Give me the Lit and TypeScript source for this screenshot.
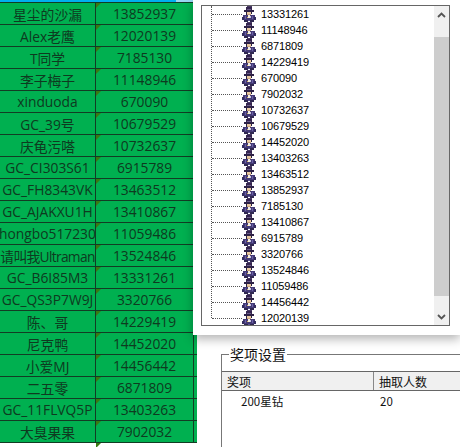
import { LitElement, html, css, svg } from "lit";
import { customElement } from "lit/decorators.js";

const ROWS: [string, string][] = [
  ["星尘的沙漏", "13852937"], ["Alex老鹰", "12020139"], ["T同学", "7185130"], ["李子梅子", "11148946"],
  ["xinduoda", "670090"], ["GC_39号", "10679529"], ["庆龟污嗒", "10732637"], ["GC_CI303S61", "6915789"],
  ["GC_FH8343VK", "13463512"], ["GC_AJAKXU1H", "13410867"], ["hongbo517230", "11059486"], ["请叫我Ultraman", "13524846"],
  ["GC_B6I85M3", "13331261"], ["GC_QS3P7W9J", "3320766"], ["陈、哥", "14229419"], ["尼克鸭", "14452020"],
  ["小爱MJ", "14456442"], ["二五零", "6871809"], ["GC_11FLVQ5P", "13403263"], ["大臭果果", "7902032"],
];
const TREE = ["13331261", "11148946", "6871809", "14229419", "670090", "7902032", "10732637", "10679529", "14452020", "13403263",
  "13463512", "13852937", "7185130", "13410867", "6915789", "3320766", "13524846", "11059486", "14456442", "12020139"];

// x, y, w, h, colour: a 14x16 pixel sprite
const SPRITE: [number, number, number, number, string][] = [
  [5, 0, 5, 1, "#4a3a66"], [4, 1, 6, 3, "#35264f"], [2, 4, 10, 2, "#2e2246"], [5, 3, 4, 1, "#6b5a8a"],
  [5, 6, 4, 2, "#e9c9a0"], [4, 6, 1, 3, "#2a2040"], [9, 6, 1, 2, "#2a2040"], [5, 8, 4, 1, "#c9a27a"],
  [1, 9, 12, 5, "#443a75"], [0, 11, 2, 3, "#332c5e"], [12, 11, 2, 3, "#332c5e"], [6, 9, 2, 3, "#f2efe6"],
  [5, 11, 1, 1, "#d8b45a"], [8, 10, 1, 2, "#c8c4e0"], [2, 14, 4, 2, "#2f2850"], [8, 14, 4, 2, "#2f2850"],
  [6, 14, 2, 1, "#5a5298"], [3, 10, 1, 3, "#6a60a8"], [10, 10, 1, 3, "#6a60a8"],
];

@customElement("app-root")
export class AppRoot extends LitElement {
  static styles = css`
    :host { display: block; width: 460px; height: 447px; overflow: hidden; background: #fff; }
    .page { display: flex; align-items: flex-start; height: 447px; }

    .sheet { flex: none; width: 197px; font-family: "Open Sans", "Noto Sans CJK SC", sans-serif; font-size: 13.8px; color: #0e3a20; }
    .strip { display: grid; grid-template-columns: 96px 98px 3px; height: 2px; border-bottom: 1px solid #123c24; }
    .strip i { background: #00b0f0; }
    .strip i.fade { background: linear-gradient(to right, #00b0f0 80px, #9ad7f2 80px); }
    .row { display: grid; grid-template-columns: 96px 98px 3px; height: 22px; box-sizing: border-box; background: #00b050; border-bottom: 1px solid #123c24; }
    .cell { position: relative; display: flex; align-items: center; justify-content: center; white-space: nowrap; overflow: hidden; border-right: 1px solid #123c24; }
    .cell.tight { letter-spacing: -0.7px; }
    .mark { position: absolute; left: 0; top: 0; width: 0; height: 0; border-top: 5px solid #3b7a12; border-right: 5px solid transparent; }
    .tail { position: relative; height: 5px; margin-left: 96px; }

    .right { flex: none; width: 267px; margin-left: -4px; position: relative; }
    .panel { background: #fff; height: 335px; box-sizing: border-box; padding: 5px 10px 9px 8px; box-shadow: 0 4px 10px rgba(0, 0, 0, 0.3); position: relative; }
    .tree { height: 321px; box-sizing: border-box; border: 1px solid #666; display: flex; background: #fff; overflow: hidden; }
    .items { flex: 1; position: relative; font-family: "Liberation Sans", sans-serif; font-size: 11px; color: #000; }
    .vline { position: absolute; left: 9px; top: 0; height: 312px; border-left: 1px dotted #555; }
    .item { height: 16px; display: flex; align-items: center; }
    .hline { width: 30px; margin-left: 10px; border-top: 1px dotted #555; }
    .item svg { display: block; flex: none; width: 14px; height: 16px; }
    .item span { margin-left: 5px; letter-spacing: -0.1px; }
    .bar { flex: none; width: 15px; background: #f0f0f0; display: flex; flex-direction: column; }
    .arrow { box-sizing: border-box; height: 31px; padding-top: 6px; display: flex; justify-content: center; }
    .arrow svg { width: 9px; height: 6px; display: block; }
    .thumb { flex: 1; background: #cdcdcd; }
    .arrow.down { height: 29px; padding-top: 18px; }

    .group { margin: 19px 0 0 28px; height: 120px; border-left: 1px solid #777; border-top: 1px solid #777; font-family: "Noto Sans CJK SC", sans-serif; color: #111; }
    .title { width: fit-content; margin: -10px 0 8px 7px; padding: 0 1px; background: #fff; font-size: 14px; line-height: 18px; height: 18px; }
    .head { display: grid; grid-template-columns: 152px 1fr; height: 20px; box-sizing: border-box; border-top: 1px solid #666; border-bottom: 1px solid #666; background: #f0f0f0; font-size: 12px; }
    .head div { display: flex; align-items: center; padding-left: 5px; }
    .head div:first-child { border-right: 1px solid #888; }
    .data { display: grid; grid-template-columns: 152px 1fr; font-size: 11.5px; line-height: 20px; }
    .data div:first-child { padding-left: 19px; }
    .data div:last-child { padding-left: 6px; }
  `;

  private sprite() {
    return html`<svg viewBox="0 0 14 16" shape-rendering="crispEdges">
      ${SPRITE.map(([x, y, w, h, c]) => svg`<rect x=${x} y=${y} width=${w} height=${h} fill=${c}></rect>`)}
    </svg>`;
  }

  render() {
    return html`<div class="page">
      <div class="sheet">
        <div class="strip"><i></i><i class="fade"></i><i></i></div>
        ${ROWS.map(([a, b]) => html`<div class="row">
          <div class="cell ${a.includes("Ultraman") ? "tight" : ""}">${a}</div>
          <div class="cell"><span class="mark"></span>${b}</div>
          <div></div>
        </div>`)}
        <div class="tail"><span class="mark"></span></div>
      </div>
      <div class="right">
        <div class="panel">
          <div class="tree">
            <div class="items">
              <div class="vline"></div>
              ${TREE.map((t) => html`<div class="item"><div class="hline"></div>${this.sprite()}<span>${t}</span></div>`)}
            </div>
            <div class="bar">
              <div class="arrow"><svg viewBox="0 0 9 6"><path d="M1 5 4.5 1.5 8 5" fill="none" stroke="#555" stroke-width="1.8"></path></svg></div>
              <div class="thumb"></div>
              <div class="arrow down"><svg viewBox="0 0 9 6"><path d="M1 1 4.5 4.5 8 1" fill="none" stroke="#555" stroke-width="1.8"></path></svg></div>
            </div>
          </div>
        </div>
        <div class="group">
          <div class="title">奖项设置</div>
          <div class="head"><div>奖项</div><div>抽取人数</div></div>
          <div class="data"><div>200星钻</div><div>20</div></div>
        </div>
      </div>
    </div>`;
  }
}
